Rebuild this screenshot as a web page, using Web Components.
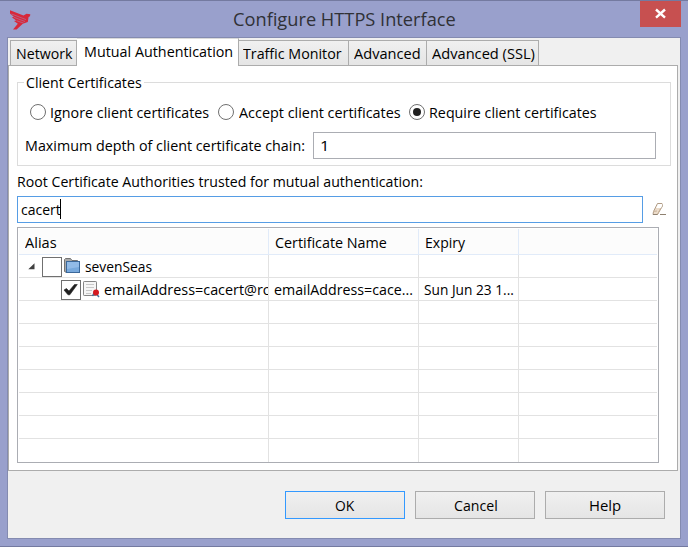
<!DOCTYPE html>
<html lang="en">
<head>
<meta charset="utf-8">
<title>Configure HTTPS Interface</title>
<style>
html,body{margin:0;height:100%;overflow:hidden}
body{font:15px/20px "Open Sans","Noto Sans",sans-serif;color:#000}
</style>
</head>
<body>
<https-dialog></https-dialog>
<script>
const define=(name,html,init)=>{
  const t=document.createElement('template');t.innerHTML=html;
  customElements.define(name,class extends HTMLElement{
    constructor(){super();this.attachShadow({mode:'open'}).append(t.content.cloneNode(true));}
    connectedCallback(){if(init)init(this,this.shadowRoot);}
  });
};
const pen=document.createElement('canvas').getContext('2d');

/* Label whose glyphs are condensed to span exactly `w` pixels */
define('fit-text',`<style>
:host{display:block;flex:none;white-space:pre;height:20px}
span{display:inline-block;transform-origin:0 0}
</style><span><slot></slot></span>`,(h,r)=>{
  const w=+h.getAttribute('w'),s=getComputedStyle(h);
  pen.font=`${s.fontWeight} ${s.fontSize} ${s.fontFamily}`;
  const m=pen.measureText(h.textContent),l=-m.actualBoundingBoxLeft;
  const k=w/(m.actualBoundingBoxRight-l);
  h.style.width=w+'px';
  r.querySelector('span').style.transform=`translateX(${-l*k}px) scaleX(${k})`;
});

define('title-bar',`<style>
:host{display:flex;height:37px;box-sizing:border-box;align-items:flex-start;padding-left:10px}
svg{display:block}
.logo{margin-top:9px}
fit-text{font-size:18.3px;line-height:26px;color:#303136;margin:5px 0 0 203px}
.close{margin-left:auto;margin-right:7px;width:41px;height:26px;background:#c75050}
</style>
<svg class="logo" width="21" height="21" viewBox="0 0 21 21"><path fill="#d8283a" d="M0 .3 13.500 5.400 16.500 3.800 20.300 4.300 20 6.300 18.600 7 17.800 12 12.800 13.800 6.600 19.400H3L7.800 13.800 4 11 6.200 10.400 1.800 7.300 4 6.900 0 3.600Z"/><path d="m1.500 4 14.500 5.600M4 7.300l11 4.200M6.500 10.700l7 2.300" stroke="#a585ad" stroke-width=".6"/></svg>
<fit-text w="221.5">Configure HTTPS Interface</fit-text>
<div class="close"><svg width="41" height="26"><path d="m16 8.5 9 8.2m0-8.2-9 8.2" stroke="#fff" stroke-width="2.4"/></svg></div>`);

define('tab-item',`<style>
:host{display:block;box-sizing:border-box;height:26px;border:1px solid #acacac;border-left-width:0;background:linear-gradient(#f0f0f0,#e5e5e5);padding:2px 0 0 var(--pad,4.5px);width:var(--w);margin-top:2px}
:host([first]){border-left-width:1px;padding-left:5.5px}
:host([active]){height:28px;background:#fff;border-bottom:0;border-top-color:#dadada;margin-top:0;padding:2px 0 0 7.5px}
</style><slot></slot>`,h=>h.style.setProperty('--w',h.getAttribute('w')+'px'));

define('radio-option',`<style>
:host{display:flex;gap:4px;align-items:flex-start}
svg{display:block;margin-top:2px}
</style><svg width="17" height="17"><circle cx="8" cy="8" r="7.500" fill="#fff" stroke="#707070" stroke-width="1"/><circle class="dot" cx="8" cy="8" r="4" fill="#202020"/></svg><slot></slot>`,
(h,r)=>{if(!h.hasAttribute('checked'))r.querySelector('.dot').remove();});

define('group-box',`<style>
:host{display:block;box-sizing:border-box;width:654px;height:84px;border:1px solid #dcdcdc;margin:16px 0 0 8px}
.legend{display:block;width:fit-content;background:#fff;margin:-11px 0 0 6px;padding:0 2px}
</style><div class="legend"><slot name="legend"></slot></div><slot></slot>`);

define('text-field',`<style>
:host{display:flex;box-sizing:border-box;height:27px;border:1px solid #abadb3;background:#fff;padding:2px 0 0 7px}
:host([focused]){border-color:#569de5;padding:2px 0 0 2.5px}
i{display:none;width:1px;height:20px;background:#000}
:host([focused]) i{display:block}
</style><slot></slot><i></i>`);

define('push-button',`<style>
:host{display:flex;justify-content:center;box-sizing:border-box;width:120px;height:28px;border:1px solid #acacac;background:linear-gradient(#f0f0f0,#e5e5e5);padding-top:3px}
:host([default]){border-color:#3399ff}
</style><slot></slot>`);

define('check-box',`<style>:host{display:block;flex:none}svg{display:block}</style>
<svg width="20" height="20"><rect x=".5" y=".5" width="19" height="19" fill="#fff" stroke="#707070"/><path class="tick" d="M3 10 5.500 8.500 8 11 13.500 4.500H16.300L8.800 14.800H7Z" fill="#202020" stroke="#202020" stroke-width=".6"/></svg>`,
(h,r)=>{if(!h.hasAttribute('checked'))r.querySelector('.tick').remove();});

define('folder-icon',`<style>:host{display:block}svg{display:block}</style>
<svg width="17" height="17"><path d="M.5 13.5V1.500L1.500.5H6.500l1.500 2h5.500v3H2.500v9Z" fill="#a9a9a9" stroke="#737373"/><rect x="2.500" y="3.500" width="13" height="11" fill="#78a9dc" stroke="#3b689a"/><path d="M3 4h12v5L3 11Z" fill="#92bbe7"/></svg>`);

define('cert-icon',`<style>:host{display:block}svg{display:block}</style>
<svg width="17" height="17"><rect x=".5" y=".5" width="13" height="14" rx=".7" fill="#f5f5f5" stroke="#858585"/><path d="M3 3.5h8M3 6.5h8M3 9.5h6M3 12.5h5" stroke="#c8c8c8"/><path d="m11 12-1.500 3M13.500 13l2.500 3" stroke="#426f9b" stroke-width="1.5"/><circle cx="13" cy="11.5" r="3" fill="#d41a20"/></svg>`);

define('table-cell',`<style>
:host{display:flex;box-sizing:border-box;overflow:hidden;border-right:1px solid var(--line,#e2e2e2);min-width:0}
:host([last]){border-right:0}
</style><slot></slot>`);
define('table-row',`<style>
:host{display:grid;grid-template-columns:250px 150px 100px 138px;box-sizing:border-box;height:23px;border-bottom:1px solid #e2e2e2}
:host([head]){--line:#e1ebf9;height:26px;background:#fcfcfc;border-color:#e1ebf9}
:host([end]){border-bottom:0}
</style><slot></slot>`);

define('cert-table',`<style>
:host{display:block;box-sizing:border-box;width:642px;height:236px;border:1px solid #abadb3;padding:1px;margin:4px 0 0 8px;background:#fff}
fit-text{margin-top:0}
[head] fit-text{margin:3px 0 0 6px}
.arrow{display:block;flex:none;margin:8px 0 0 9px}
.a check-box{margin:2px 0 0 7px}
.a folder-icon{margin:3px 0 0 2px}
.a fit-text{margin:1px 0 0 4px}
.b{overflow:hidden}
.b check-box{margin:2px 0 0 42px}
.b cert-icon{margin:3px 0 0 2px}
.b fit-text{margin:1px 0 0 3.5px}
.c fit-text{margin:1px 0 0 5px}
</style>
<table-row head><table-cell><fit-text w="31.5" style="margin-left:5.5px">Alias</fit-text></table-cell><table-cell><fit-text w="111.5">Certificate Name</fit-text></table-cell><table-cell><fit-text w="39.5" style="margin-left:6.5px">Expiry</fit-text></table-cell><table-cell last></table-cell></table-row>
<table-row><table-cell class="a"><svg class="arrow" width="7" height="7"><path d="M6.5.3v6H.3Z" fill="#404040"/></svg><check-box></check-box><folder-icon></folder-icon><fit-text w="67">sevenSeas</fit-text></table-cell><table-cell></table-cell><table-cell></table-cell><table-cell last></table-cell></table-row>
<table-row><table-cell class="b"><check-box checked></check-box><cert-icon></cert-icon><fit-text w="167.5">emailAddress=cacert@ro</fit-text></table-cell><table-cell class="c"><fit-text w="138">emailAddress=cace...</fit-text></table-cell><table-cell class="c"><fit-text w="89">Sun Jun 23 1...</fit-text></table-cell><table-cell last></table-cell></table-row>
<div id="blank"></div>`,(h,r)=>{
  r.getElementById('blank').innerHTML=Array.from({length:7},(_,i)=>`<table-row${i==6?' end':''}><table-cell></table-cell><table-cell></table-cell><table-cell></table-cell><table-cell last></table-cell></table-row>`).join('');
});

define('https-dialog',`<style>
:host{display:block;box-sizing:border-box;width:688px;height:547px;background:#99a0cc;border:solid #747aa0;border-width:1px 0}
.client{box-sizing:border-box;width:674px;height:502px;margin-left:7px;border:1px solid #848bb0;background:#f0f0f0;margin-top:-1px}
.tabs{display:flex;height:28px;padding-left:2px;margin-bottom:-1px;position:relative;z-index:1}
.panel{box-sizing:border-box;width:670px;height:406px;border:1px solid #acacac;background:#fff;display:flow-root}
.radios{display:flex;margin:10px 0 0 12px}
.depth{display:flex;margin:10px 0 0 7.5px}
.depth fit-text{margin-top:3px}
.depth text-field{margin-left:9.5px;width:343px}
.depth text-field fit-text,text-field fit-text{margin:0}
.root{margin:5px 0 0 8.5px}
.filter{display:flex;margin:5px 0 0 8px}
.filter text-field{width:626px}
.filter svg{display:block;margin:7px 0 0 9px}
.buttons{display:flex;gap:10px;margin:20px 0 0 277px}
</style>
<title-bar></title-bar>
<div class="client">
<div class="tabs">
<tab-item first w="67"><fit-text w="55.5">Network</fit-text></tab-item><tab-item active w="162"><fit-text w="147">Mutual Authentication</fit-text></tab-item><tab-item w="110" style="--pad:4px"><fit-text w="98.5">Traffic Monitor</fit-text></tab-item><tab-item w="78"><fit-text w="65.5">Advanced</fit-text></tab-item><tab-item w="112"><fit-text w="102.5">Advanced (SSL)</fit-text></tab-item>
</div>
<div class="panel">
<group-box><fit-text slot="legend" w="115.5">Client Certificates</fit-text>
<div class="radios"><radio-option style="width:188px"><fit-text w="158">Ignore client certificates</fit-text></radio-option><radio-option style="width:191px"><fit-text w="161.5">Accept client certificates</fit-text></radio-option><radio-option checked><fit-text w="166.5">Require client certificates</fit-text></radio-option></div>
<div class="depth"><fit-text w="278">Maximum depth of client certificate chain:</fit-text><text-field><fit-text w="5.5">1</fit-text></text-field></div>
</group-box>
<fit-text class="root" w="404">Root Certificate Authorities trusted for mutual authentication:</fit-text>
<div class="filter"><text-field focused><fit-text w="39.5">cacert</fit-text></text-field>
<svg width="15" height="13"><path d="m5.5.5-4 8-.5 3h4.500l5-8.500-.5-2.500Z" fill="#ecdcca" stroke="#b09c86"/><path d="m6 1-2 4H9L10.300 2 9.800 1Z" fill="#fff"/><path d="M1 8.500 5 8M5.500 11.500l3-6" stroke="#c9b39b" fill="none"/><path d="M1 11.500h4.500M8 11.500h6" stroke="#8f8170"/></svg></div>
<cert-table></cert-table>
</div>
<div class="buttons"><push-button default><fit-text w="20">OK</fit-text></push-button><push-button><fit-text w="43">Cancel</fit-text></push-button><push-button><fit-text w="31">Help</fit-text></push-button></div>
</div>`);
</script>
</body>
</html>
